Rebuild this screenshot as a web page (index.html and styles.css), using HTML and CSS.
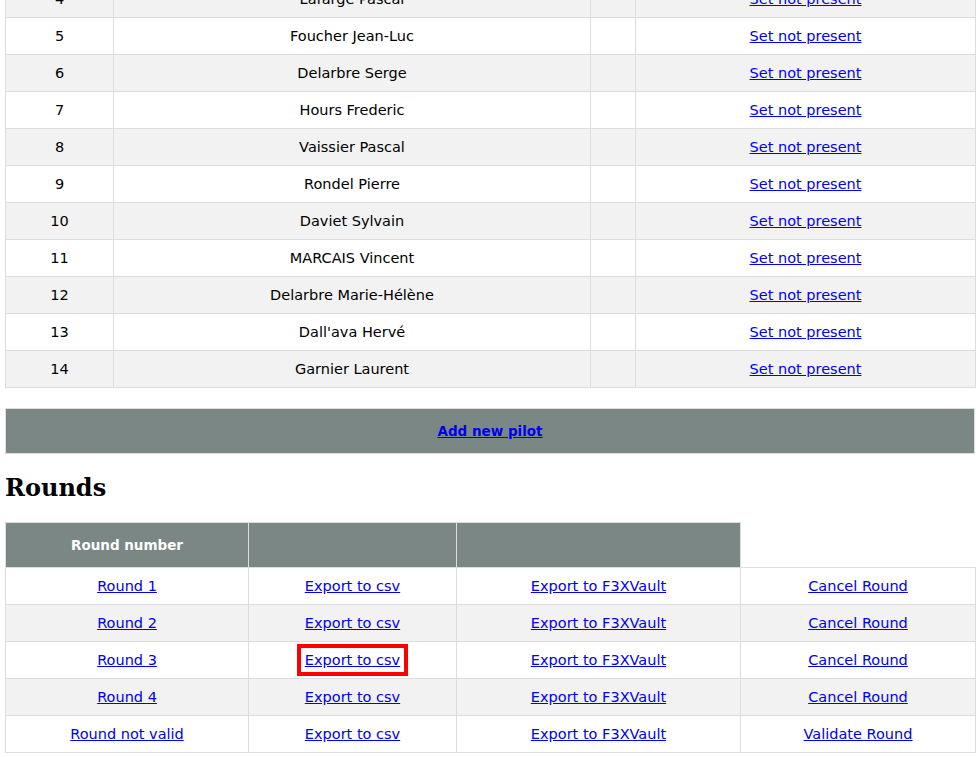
FILE: index.html
```html
<!DOCTYPE html>
<html>
<head>
<meta charset="utf-8">
<link rel="stylesheet" href="styles.css">
</head>
<body>
<table class="grid pilots">
  <colgroup><col class="c1"><col class="c2"><col class="c3"><col class="c4"></colgroup>
  <tbody>
    <tr class="alt"><td>4</td><td>Lafarge Pascal</td><td></td><td><a href="#">Set not present</a></td></tr>
    <tr><td>5</td><td>Foucher Jean-Luc</td><td></td><td><a href="#">Set not present</a></td></tr>
    <tr class="alt"><td>6</td><td>Delarbre Serge</td><td></td><td><a href="#">Set not present</a></td></tr>
    <tr><td>7</td><td>Hours Frederic</td><td></td><td><a href="#">Set not present</a></td></tr>
    <tr class="alt"><td>8</td><td>Vaissier Pascal</td><td></td><td><a href="#">Set not present</a></td></tr>
    <tr><td>9</td><td>Rondel Pierre</td><td></td><td><a href="#">Set not present</a></td></tr>
    <tr class="alt"><td>10</td><td>Daviet Sylvain</td><td></td><td><a href="#">Set not present</a></td></tr>
    <tr><td>11</td><td>MARCAIS Vincent</td><td></td><td><a href="#">Set not present</a></td></tr>
    <tr class="alt"><td>12</td><td>Delarbre Marie-Hélène</td><td></td><td><a href="#">Set not present</a></td></tr>
    <tr><td>13</td><td>Dall'ava Hervé</td><td></td><td><a href="#">Set not present</a></td></tr>
    <tr class="alt"><td>14</td><td>Garnier Laurent</td><td></td><td><a href="#">Set not present</a></td></tr>
  </tbody>
</table>

<table class="grid addbar">
  <tr><th><a href="#">Add new pilot</a></th></tr>
</table>

<h2 class="title">Rounds</h2>

<table class="grid rounds">
  <colgroup><col class="r1"><col class="r2"><col class="r3"><col class="r4"></colgroup>
  <thead>
    <tr><th>Round number</th><th></th><th></th></tr>
  </thead>
  <tbody>
    <tr><td><a href="#">Round 1</a></td><td><a href="#">Export to csv</a></td><td><a href="#">Export to F3XVault</a></td><td><a href="#">Cancel Round</a></td></tr>
    <tr class="alt"><td><a href="#">Round 2</a></td><td><a href="#">Export to csv</a></td><td><a href="#">Export to F3XVault</a></td><td><a href="#">Cancel Round</a></td></tr>
    <tr><td><a href="#">Round 3</a></td><td><a href="#" class="marked">Export to csv</a></td><td><a href="#">Export to F3XVault</a></td><td><a href="#">Cancel Round</a></td></tr>
    <tr class="alt"><td><a href="#">Round 4</a></td><td><a href="#">Export to csv</a></td><td><a href="#">Export to F3XVault</a></td><td><a href="#">Cancel Round</a></td></tr>
    <tr><td><a href="#">Round not valid</a></td><td><a href="#">Export to csv</a></td><td><a href="#">Export to F3XVault</a></td><td><a href="#">Validate Round</a></td></tr>
  </tbody>
</table>
</body>
</html>
```
FILE: styles.css
```css
html, body {
  margin: 0;
  padding: 0;
  background: #fff;
}
body {
  padding: 0 4px 0 5px;
  font-family: "DejaVu Sans", Tahoma, sans-serif;
  font-size: 14.5px;
  color: #000;
}
a { color: #0000ee; }

.grid {
  width: 970px;
  border-collapse: collapse;
  table-layout: fixed;
}
.grid td, .grid th {
  border: 1px solid #dddddd;
  text-align: center;
  padding: 0;
  height: 36px;
}
.grid tr.alt td { background: #f2f2f2; }

.pilots { margin-top: -20px; }
.c1 { width: 108px; }
.c2 { width: 477px; }
.c3 { width: 45px; }
.c4 { width: 340px; }

.addbar { margin-top: 20px; }
.addbar th {
  background: #7b8785;
  height: 44px;
  font-weight: bold;
  font-size: 13.5px;
}

.title {
  font-family: "DejaVu Serif", serif;
  font-size: 24px;
  font-weight: bold;
  margin: 19px 0 20px;
}

.r1 { width: 243px; }
.r2 { width: 208px; }
.r3 { width: 284px; }
.r4 { width: 235px; }
.rounds thead th {
  background: #7b8785;
  color: #fff;
  font-weight: bold;
  font-size: 13.5px;
  height: 44px;
}
.marked {
  outline: 4px solid #ff0000;
  outline-offset: 4px;
}
```
